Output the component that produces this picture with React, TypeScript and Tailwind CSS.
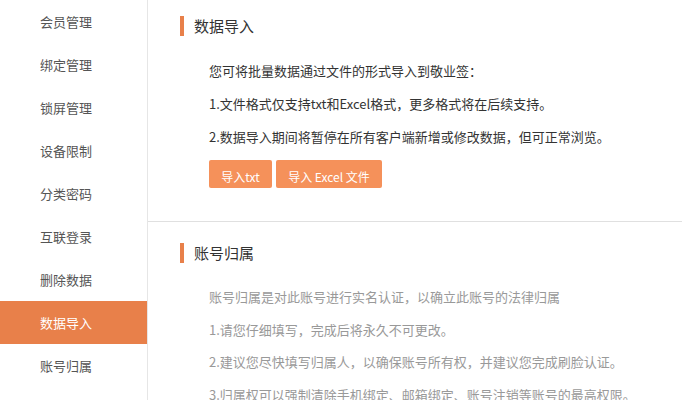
import React from "react";

const menu = ["会员管理", "绑定管理", "锁屏管理", "设备限制", "分类密码", "互联登录", "删除数据", "数据导入", "账号归属"];

function Title({ text }: { text: string }) {
  return (
    <div className="flex items-center h-[20px] pl-[32px]">
      <div className="w-[4px] h-[20px] bg-[#e8804a]" />
      <div className="ml-[10px] text-[15px] text-[#333]">{text}</div>
    </div>
  );
}

export default function App() {
  return (
    <div
      className="flex w-[682px] h-[400px] overflow-hidden bg-white"
      style={{ fontFamily: '"Noto Sans CJK SC", "Noto Sans", sans-serif' }}
    >
      <div className="w-[148px] shrink-0 border-r border-[#e6e6e6] flex flex-col">
        {menu.map((m) => (
          <div
            key={m}
            className={
              m === "数据导入"
                ? "h-[43px] shrink-0 flex items-center pl-[40px] text-[13px] bg-[#e8804a] text-white"
                : "h-[43px] shrink-0 flex items-center pl-[40px] text-[13px] text-[#555]"
            }
          >
            {m}
          </div>
        ))}
      </div>
      <div className="flex-1 flex flex-col">
        <div className="h-[222px] shrink-0 border-b border-[#e0e0e0] pt-[16px]">
          <Title text="数据导入" />
          <div className="pl-[61px] mt-[18px] text-[13px] leading-[33px] text-[#333]">
            <div>您可将批量数据通过文件的形式导入到敬业签：</div>
            <div>1.文件格式仅支持txt和Excel格式，更多格式将在后续支持。</div>
            <div>2.数据导入期间将暂停在所有客户端新增或修改数据，但可正常浏览。</div>
            <div className="flex gap-[4px] mt-[7px]">
              <button className="h-[28px] w-[63px] bg-[#f5915a] text-white text-[12px] rounded-[2px]">导入txt</button>
              <button className="h-[28px] w-[106px] bg-[#f5915a] text-white text-[12px] rounded-[2px]">导入 Excel 文件</button>
            </div>
          </div>
        </div>
        <div className="pt-[21px]">
          <Title text="账号归属" />
          <div className="pl-[61px] mt-[18px] text-[13px] leading-[32.5px] text-[#999] whitespace-nowrap">
            <div>账号归属是对此账号进行实名认证，以确立此账号的法律归属</div>
            <div>1.请您仔细填写，完成后将永久不可更改。</div>
            <div>2.建议您尽快填写归属人，以确保账号所有权，并建议您完成刷脸认证。</div>
            <div>3.归属权可以强制清除手机绑定、邮箱绑定、账号注销等账号的最高权限。</div>
          </div>
        </div>
      </div>
    </div>
  );
}
